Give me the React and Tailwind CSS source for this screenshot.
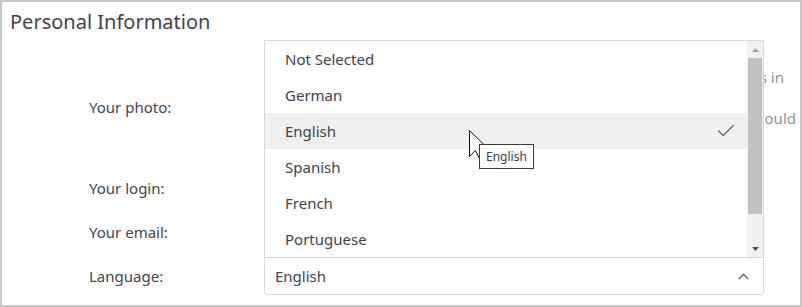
import { Check, ChevronUp } from 'lucide-react';

const LANGUAGES = ['Not Selected', 'German', 'English', 'Spanish', 'French', 'Portuguese'];
const SELECTED = 'English';

function Scrollbar() {
  return (
    <div className="w-[16px] bg-[#f0f0f0] flex flex-col items-center">
      <div className="h-[17px] flex items-center justify-center">
        <svg width="7" height="4" viewBox="0 0 7 4">
          <path d="M0 4 L3.5 0 L7 4 Z" fill="#a3a3a3" />
        </svg>
      </div>
      <div className="w-[14px] h-[156px] bg-[#c1c1c1]" />
      <div className="flex-1" />
      <div className="h-[17px] flex items-center justify-center">
        <svg width="7" height="4" viewBox="0 0 7 4">
          <path d="M0 0 L7 0 L3.5 4 Z" fill="#505050" />
        </svg>
      </div>
    </div>
  );
}

function Cursor() {
  return (
    <svg
      className="absolute left-[466px] top-[127px]"
      width="24"
      height="34"
      viewBox="0 0 24 34"
    >
      <path
        d="M1.5 1.5 L1.5 27.5 L7.5 21.5 L12 31 L15.5 29.5 L11 20 L20.5 20 Z"
        fill="#fff"
        stroke="#111"
        strokeWidth="1"
        strokeLinejoin="miter"
      />
    </svg>
  );
}

export default function App() {
  return (
    <div className="relative w-[802px] h-[307px] overflow-hidden bg-white border-2 border-[#c8c8c8] font-['Noto_Sans',sans-serif] text-[#40454b]">
      <h2 className="pl-2 pt-[6px] text-[20px] leading-[28px] text-[#3e4349]">Personal Information</h2>

      <div className="text-[15px]">
        <div className="flex h-[130px]">
          <div className="w-[262px] pl-[87px] pt-[60px]">Your photo:</div>
          <div className="flex-1 flex flex-col pt-[31px] text-[#8c939c] overflow-hidden">
            <div className="flex justify-end pr-[16px] whitespace-nowrap leading-[20px]">
              Your photo will be shown to other users in
            </div>
            <div className="flex justify-end pr-[4px] whitespace-nowrap leading-[20px] mt-[21px]">
              chat rooms and forums. The image could
            </div>
          </div>
        </div>
        <div className="flex h-[44px] items-center">
          <div className="w-[262px] pl-[87px]">Your login:</div>
        </div>
        <div className="flex h-[44px] items-center">
          <div className="w-[262px] pl-[87px]">Your email:</div>
        </div>
        <div className="flex h-[44px] items-center">
          <div className="w-[262px] pl-[87px]">Language:</div>
          <div className="w-[500px] h-[38px] border border-[#d9d9d9] rounded-b-[3px] flex items-center justify-between pl-[10px] pr-[11px] text-[#3e4349]">
            <span>{SELECTED}</span>
            <ChevronUp className="h-[17px] w-[17px] text-[#7c8088]" strokeWidth={2.5} />
          </div>
        </div>
      </div>

      <div className="absolute left-[262px] top-[38px] w-[500px] h-[217px] bg-white border-x border-t border-[#d9d9d9] flex text-[15px] text-[#3e4349]">
        <ul className="flex-1">
          {LANGUAGES.map((lang) => (
            <li
              key={lang}
              className={`h-[36px] flex items-center justify-between pl-[20px] pr-[10px] ${
                lang === SELECTED ? 'bg-[#efefef]' : ''
              }`}
            >
              <span>{lang}</span>
              {lang === SELECTED && <Check className="h-[22px] w-[22px] text-[#6b6f75]" strokeWidth={1.6} />}
            </li>
          ))}
        </ul>
        <Scrollbar />
      </div>

      <Cursor />

      <div className="absolute left-[477px] top-[142px] h-[25px] px-[6px] bg-white border border-[#3a3a3a] text-[12px] leading-[23px] text-[#3a3f45]">
        English
      </div>
    </div>
  );
}
